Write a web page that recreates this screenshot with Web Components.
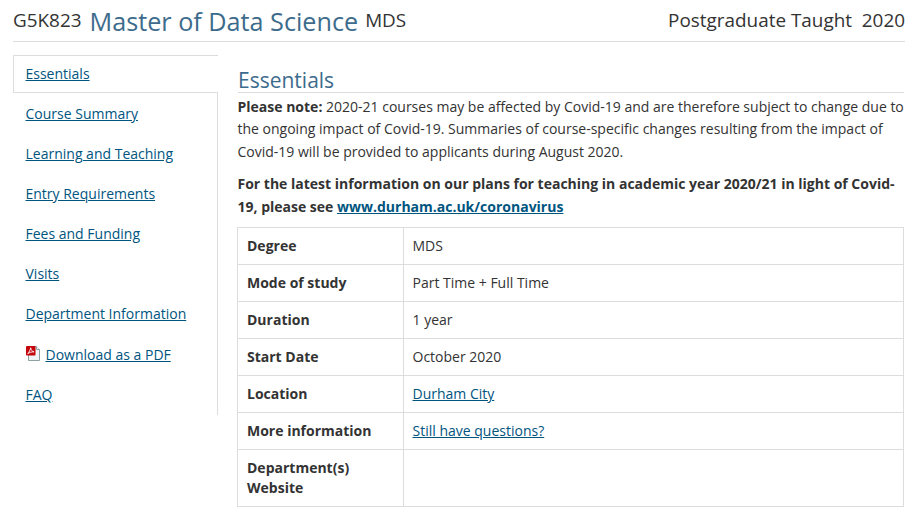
<!DOCTYPE html>
<html><head><meta charset="utf-8"><title>Master of Data Science</title>
<style>html,body{margin:0;background:#fff;font-family:"Open Sans",sans-serif;color:#333;font-size:14px;line-height:22.4px}</style>
</head><body>
<course-page>
  <course-header slot="header"></course-header>
  <course-nav slot="nav"></course-nav>
  <course-main slot="main"></course-main>
</course-page>
<script>
function def(name, html){
  customElements.define(name, class extends HTMLElement{
    constructor(){super();this.attachShadow({mode:'open'}).innerHTML=html;}
  });
}
def('course-page',`<style>
:host{display:block;width:920px;height:518px;overflow:hidden;box-sizing:border-box;padding:0 15px 0 13px}
.cols{display:flex;margin-top:13px}
</style><slot name="header"></slot><div class="cols"><slot name="nav"></slot><slot name="main"></slot></div>`);
def('course-header',`<style>
:host{display:flex;align-items:center;height:42px;box-sizing:border-box;border-bottom:1px solid #ddd;padding-bottom:1px;color:#333;line-height:34px}
.code{font-size:18.9px;margin-right:8px}
.title{font-size:25.2px;color:#3d6b8c;margin-right:7px;padding-top:2px}
.abbr{font-size:18.9px}
.right{margin-left:auto;font-size:18.9px;white-space:pre}
</style><span class="code">G5K823</span><span class="title">Master of Data Science</span><span class="abbr">MDS</span><span class="right">Postgraduate Taught  2020</span>`);
def('nav-item',`<style>
:host{display:flex;align-items:center;height:40px;box-sizing:border-box;padding-left:12.5px;border-right:1px solid #ddd;white-space:nowrap}
:host([active]){height:38px;border:1px solid #ddd;border-right:0;padding-left:11.5px}
:host([lead]){height:41px;padding-top:1px}
:host([tail]){height:41px;padding-top:1px}
a{color:#00557f;text-decoration:underline}
::slotted(svg){margin-right:5px;margin-top:-4px}
</style><slot name="icon"></slot><a href="#"><slot></slot></a>`);
def('course-nav',`<style>
:host{display:block;width:205px;flex:none}
</style>
<nav-item active>Essentials</nav-item>
<nav-item lead>Course Summary</nav-item>
<nav-item>Learning and Teaching</nav-item>
<nav-item>Entry Requirements</nav-item>
<nav-item>Fees and Funding</nav-item>
<nav-item>Visits</nav-item>
<nav-item>Department Information</nav-item>
<nav-item tail><svg slot="icon" width="15" height="15" viewBox="0 0 15 15"><path d="M2.5 .5H10.5L13.5 3.5V14.5H2.5Z" fill="#eef3f3" stroke="#8fa0a2"/><path d="M10.5 .5V3.5H13.5" fill="#fff" stroke="#8fa0a2"/><rect x="0" y="0" width="9.5" height="9.5" rx="1" fill="#c4050c"/><path d="M1.8 7.6C3.2 6.2 4.3 3.8 4.7 1.8C4.9 3.8 5.9 5.3 8 5.9C5.9 5.7 3.6 6.4 1.8 7.6Z" fill="none" stroke="#fff" stroke-width=".9"/></svg>Download as a PDF</nav-item>
<nav-item>FAQ</nav-item>`);
def('info-row',`<style>
:host{display:grid;grid-template-columns:165.5px 1fr;border-bottom:1px solid #ddd;line-height:20px}
.k{font-weight:700;padding:8px 9px;border-right:1px solid #ddd}
.v{padding:8px 9px}
::slotted(a){color:#00557f}
</style><div class="k"><slot name="k"></slot></div><div class="v"><slot></slot></div>`);
def('course-main',`<style>
:host{display:block;flex:1;margin-left:20px;margin-right:1px;min-width:0}
h2{margin:0;font-weight:400;font-size:21px;line-height:28px;height:26px;padding-top:2px;margin-top:9px;border-bottom:1px solid #ddd;color:#3d6b8c}
p{margin:0 -1px 9px -.5px}
p.first{margin-top:3px;margin-bottom:10px}
a{color:#00557f}
.table{border:1px solid #ddd;border-bottom:0;margin-left:-1px}
</style>
<h2>Essentials</h2>
<p class="first"><b>Please note:</b> 2020-21 courses may be affected by Covid-19 and are therefore subject to change due to the ongoing impact of Covid-19. Summaries of course-specific changes resulting from the impact of Covid-19 will be provided to applicants during August 2020.</p>
<p><b>For the latest information on our plans for teaching in academic year 2020/21 in light of Covid-19, please see <a href="#">www.durham.ac.uk/coronavirus</a></b></p>
<div class="table">
<info-row><span slot="k">Degree</span>MDS</info-row>
<info-row><span slot="k">Mode of study</span>Part Time + Full Time</info-row>
<info-row><span slot="k">Duration</span>1 year</info-row>
<info-row><span slot="k">Start Date</span>October 2020</info-row>
<info-row><span slot="k">Location</span><a href="#">Durham City</a></info-row>
<info-row><span slot="k">More information</span><a href="#">Still have questions?</a></info-row>
<info-row><span slot="k">Department(s) Website</span></info-row>
</div>`);
</script>
</body></html>
